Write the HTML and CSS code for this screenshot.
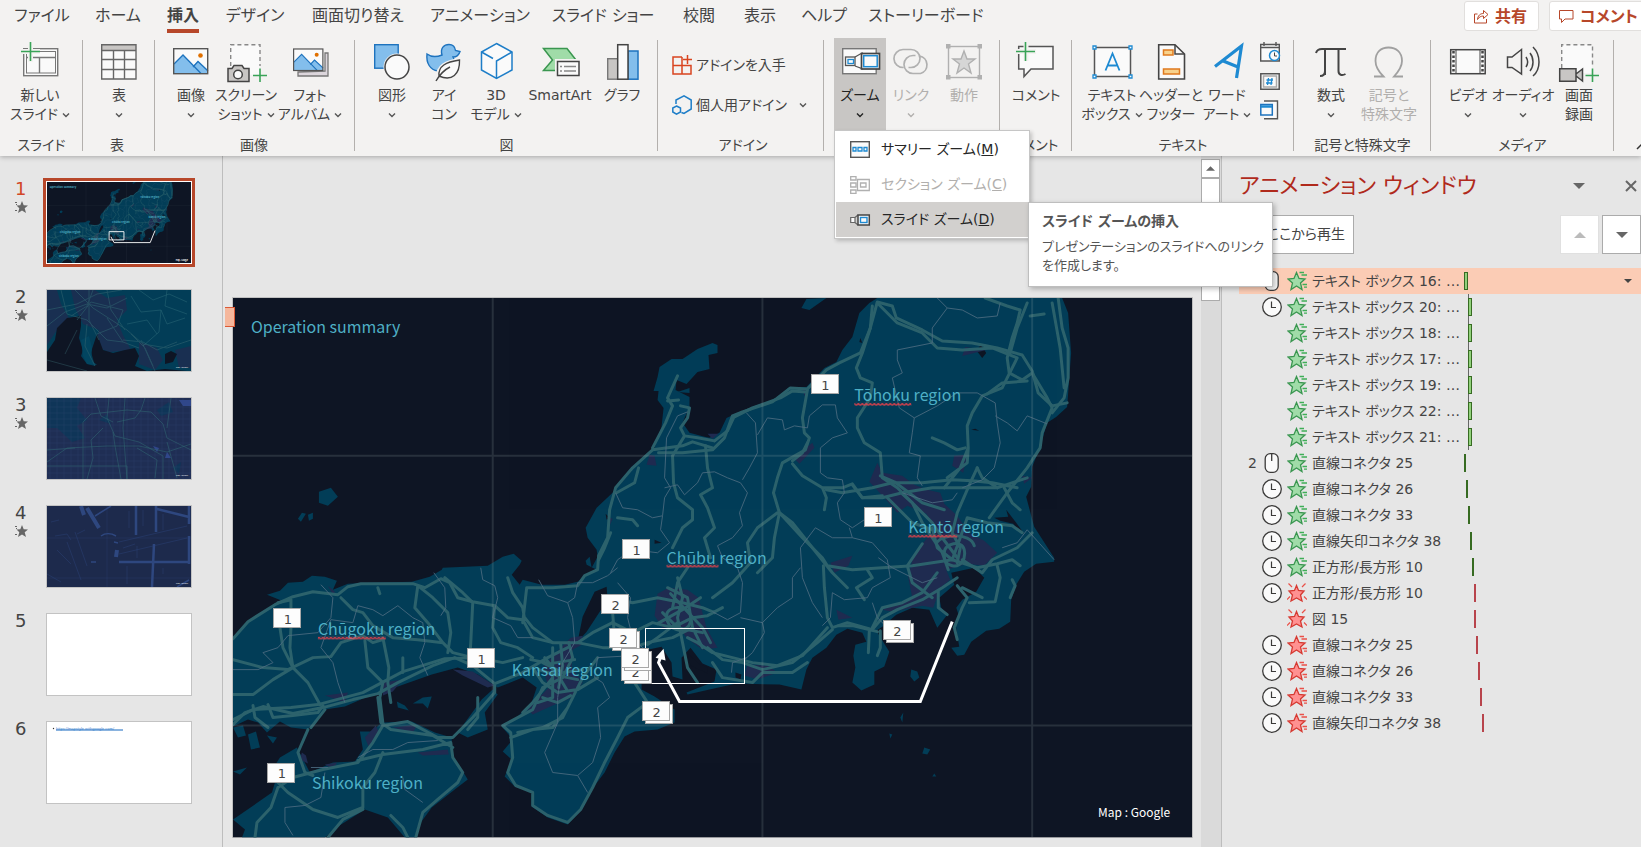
FILE: index.html
```html
<!DOCTYPE html>
<html lang="ja">
<head>
<meta charset="utf-8">
<title>プレゼンテーション</title>
<link rel="stylesheet" href="styles.css">
</head>
<body>
<svg class="defs" aria-hidden="true">
  <defs>
    <symbol id="chev" viewBox="0 0 8 6"><path d="M1 1.5 4 4.5 7 1.5" fill="none" stroke="currentColor" stroke-width="1.4"/></symbol>
    <symbol id="tri" viewBox="0 0 12 6"><path d="M0 0H12L6 6Z" fill="currentColor"/></symbol>
    <symbol id="clock" viewBox="0 0 20 20"><circle cx="10" cy="10" r="9.3" fill="#fafafa" stroke="#3b3a39" stroke-width="1.3"/><path d="M9.500 4.500V10.500H14" fill="none" stroke="#3b3a39" stroke-width="1.2"/></symbol>
    <symbol id="mouse" viewBox="0 0 20 20"><rect x="3.200" y=".7" width="13" height="18.600" rx="5" fill="#fafafa" stroke="#3b3a39" stroke-width="1.3"/><path d="M9.700 1V8" stroke="#3b3a39" stroke-width="1.3"/></symbol>
    <symbol id="star-in" viewBox="0 0 20 20"><path d="M9.500 1.500 12 7.500 18 8 13.500 12 15 18.500 9.500 15 4 18.500 5.500 12 1 8 7 7.500Z" fill="#a0dca8" stroke="#3a9650" stroke-width="1.3"/><path d="M12.500 1.500H17M14.500 4H20M15.500 13.500H20M17 16.200H20" stroke="#3fae57" stroke-width="1.3"/></symbol>
    <symbol id="star-out" viewBox="0 0 20 20"><path d="M9.500 1.500 12 7.500 18 8 13.500 12 15 18.500 9.500 15 4 18.500 5.500 12 1 8 7 7.500Z" fill="#ff9191" stroke="#d63a32" stroke-width="1.3"/><path d="M12.500 1.500H17M14.500 4H20M15.500 13.500H20M17 16.200H20" stroke="#ea5048" stroke-width="1.3"/></symbol>
    <symbol id="burst" viewBox="0 0 20 20"><path d="M9.500 2.500 11.500 7.500 17 8 13.500 12 15 18 9.500 15 4 18 5.500 12 2 8 7.500 7.500Z" fill="#ff9191" stroke="#d63a32" stroke-width="1.3"/><path d="M1.500.5 5 4M18.500.5 15 4M0 16.500 3 13.500M20 16.500 17 13.500" stroke="#ea5048" stroke-width="1.2"/></symbol>
    <symbol id="fx" viewBox="0 0 13 12"><path d="M7 0 8.700 4.300 13 4.500 9.700 7.300 11 12 7 9.500 3 12 4.300 7.300 1.500 4.500 5.300 4.300Z" fill="#666"/><path d="M0 1.500H2M1 3.500H2M0 9.500H2" stroke="#666"/></symbol>
    <symbol id="picture" viewBox="0 0 36 27"><rect x=".7" y=".7" width="34" height="25" fill="#fafafa"/><path d="M1 16 10 7 28 25.500H1ZM19 19 25 13 35 22V25.500H28Z" fill="#83beec"/><path d="M1 16 10 7 28 25.500M20 19 25 13.500 35 23" fill="none" stroke="#1e73be" stroke-width="1.300"/><circle cx="27.500" cy="7.500" r="2.300" fill="#e07000"/><rect x=".7" y=".7" width="34" height="25" fill="none" stroke="#555" stroke-width="1.400"/></symbol>
    <symbol id="map" viewBox="0 0 960 540">
      <rect width="960" height="540" fill="#0e1524"/>
      <g fill="#023d57">
        <path d="M0 341 15 324 42 307 49 303 34 297 47 293 55 285 70 284 79 278 92 279 104 283 100 292 115 286 139 285 179 284 197 279 209 272 210 270 255 268 270 259 281 256 289 263 287 267 279 277 287 287 290 282 309 287 332 287 345 284 354 277 364 272 354 267 353 263 357 259 359 270 365 259 364 252 355 240 353 230 364 210 380 195 389 185 404 167 422 150 429 129 431 110 425 102 426 93 421 93 425 79 427 69 439 61 450 61 465 51 480 45 485 47 485 55 476 57 477 71 465 74 454 86 444 82 443 92 457 99 457 109 450 125 457 135 472 139 477 140 487 135 494 120 507 114 539 104 557 89 574 89 592 70 604 64 610 52 620 39 627 15 637 5 645 0H830L836 15 839 55 835 109 824 119 815 125 807 152 800 169 799 189 794 199 802 229 822 260 822 264 804 266 792 274 784 287 779 302 778 324 767 331 754 333 739 344 732 357 725 358 719 350 727 349 723 325 727 319 724 310 730 302 744 294 752 280 742 270 719 275 722 287 707 300 709 310 715 317 705 330 697 312 680 310 664 317 650 329 644 333 657 354 652 369 642 374 642 387 629 393 620 385 623 370 621 358 623 347 634 344 630 335 615 331 604 337 594 350 580 360 574 372 569 392 547 387 504 386 477 392 455 397 454 395 482 384 484 372 470 366 458 350 449 360 450 382 440 379 439 365 429 349 415 352 409 372 409 392 422 399 442 412 442 425 425 432 402 434 392 439 382 455 372 475 359 492 349 512 335 527 315 520 299 509 299 495 282 489 272 479 279 462 270 454 280 442 269 429 282 422 299 405 304 390 290 380 265 390 245 377 225 370 199 377 165 389 135 399 112 409 92 412 75 432 58 430 47 424 34 435 25 425 15 422 0 429Z"/>
        <path d="M0 522 19 509 39 495 42 485 38 474 47 460 64 450 77 475 100 465 122 464 130 452 127 434 139 434 149 425 179 424 202 435 219 440 219 459 229 472 235 482 222 492 199 510 185 529 182 540H172L155 520 132 512 105 529 92 540H9L12 532Z"/>
        <path d="M225 435 249 402 260 392 265 397 252 415 255 432 235 440Z"/>
        <path d="M86 194 98 190 105 199 95 208 86 205ZM65 221 69 215 73 216 68 224ZM75 217 80 215 80 221 76 223ZM569 10 574 1 594 0 577 12ZM679 372 685 374 687 380 682 384 678 379ZM671 415 668 420 670 425ZM657 436 660 437 658 441ZM692 450 698 452 695 457 690 456ZM700 479 702 476 704 479ZM180 406 190 400 199 399 195 411 190 406ZM445 94 457 90 457 95ZM0 474 14 470 7 477ZM15 437 23 434 27 450 18 452ZM0 430 10 428 13 438 5 440ZM34 438 44 440 40 446ZM164 404 172 408 176 413 165 410Z"/>
      </g>
      <g fill="#0e1524"><path d="M374 289 375 302 354 334 345 344 350 319 362 294ZM774 212 784 225 792 236 786 233 781 226 768 223 762 220 776 219ZM749 47 754 55 750 60 744 52ZM422 242 429 245 422 246ZM373 216 377 220 374 222ZM628 40 630 45 627 44ZM503 375 509 377 508 382 503 380ZM743 131 747 133 739 132ZM455 355 466 366 475 370 475 376 458 368Z"/></g>
      <g fill="#1f2b50">
        <path d="M645 165 650 175 670 178 682 187 695 192 708 195 712 206 725 218 737 235 752 243 765 255 752 268 735 266 714 272 718 282 708 290 701 310 690 308 660 314 650 312 680 300 676 280 680 262 690 246 704 230 694 216 675 208 665 215 652 200 637 184ZM722 158 735 157 731 175 720 168ZM425 296 436 290 455 292 466 300 474 330 485 350 470 352 454 340 447 330 430 330 422 318ZM338 340 350 338 349 347 340 352 339 370 350 385 340 400 320 408 300 417 295 412 316 390 310 370 328 350ZM92 398 115 395 112 405ZM150 385 170 382 160 394 150 398ZM220 372 240 374 262 388 255 390 230 378ZM160 430 185 427 180 435ZM185 455 215 452 216 457 190 458ZM92 467 104 465 100 472ZM95 288 102 294 100 297ZM417 157 422 158 424 168 414 167ZM598 265 620 258 616 268 602 275ZM604 312 620 320 606 322ZM515 367 535 368 545 375 525 382 512 378ZM375 219 380 221 377 228ZM561 160 580 145 582 150 567 166ZM800 180 792 186 790 178ZM475 136 486 136 480 141ZM570 90 575 94 572 98ZM754 52 730 58 733 49ZM143 428 132 440 136 450 146 435ZM69 455 73 458 75 466 67 462Z"/>
      </g>
      <g class="roads">
        <path d="M0 341 15 324 42 307 60 299 80 294 105 297 115 289 128 286 180 286 192 290 208 281 217 285 225 300 240 304 262 308 275 320 290 322 300 340 320 345 345 345 360 335 380 325"/>
        <path d="M0 427 12 415 30 409 60 416 90 410 120 402 145 396 165 385 200 368 222 360 240 368 262 386 290 375 315 360 335 350"/>
        <path d="M0 422 20 412 58 410 85 407 130 395 170 374 212 361 245 360 270 365 290 360"/>
        <path d="M47 330 50 350 60 370 75 385 87 407M58 330 57 350 60 370M0 362 30 370 55 372 80 360 98 359 108 345 130 338 140 345 150 342M0 397 20 397 40 382 60 370M45 305 58 302V310"/>
        <path d="M108 300 120 312 130 315 140 328 160 340 185 342 210 345 220 355 240 360 260 355M132 343 135 370 150 385 147 400 150 425M185 288 182 310 195 325 210 345M185 288 200 300 215 315 218 335 215 355M150 340 156 370 155 385 158 405"/>
        <path d="M212 280 230 295 240 305 238 345 237 360M262 308 260 330 268 345 285 350 300 360M170 360V375M145 290 147 296"/>
        <path d="M275 280 280 295 290 310 292 322M290 325 294 290 320 290 345 288 352 278 365 272 366 258 375 240 377 212 383 190 400 170 420 152 450 148 460 144 480 150M292 320 300 330 320 345"/>
        <path d="M384 195 402 185 406 170M385 220 400 222 405 228M366 262 372 250 378 235"/>
        <path d="M445 78 435 100 440 108 433 125 420 150M435 103 446 102M448 108 457 110 455 120 448 130 452 138 465 140 482 143M452 138 440 158 441 185 445 200 460 212 460 222 450 230 440 250M473 148 475 170 480 190 468 197 475 210 482 230 472 240 478 260"/>
        <path d="M426 155 450 155 480 152 492 140 500 118 510 114 540 104 558 90 575 91 594 72 607 65 628 55 638 30 645 4 660 8 664 20 690 32 710 43 740 45 765 50 790 57 800 73 806 95 820 108 835 105"/>
        <path d="M482 143 495 133 502 118M500 120 520 110 548 100 560 93 573 94"/>
        <path d="M575 92 570 120 572 135 577 140 573 152 550 165 545 180 541 195 547 215 560 225 580 250 600 275 615 290"/>
        <path d="M640 8 638 30 630 55 624 70 628 80 640 85 638 100 625 120 625 130 632 145 648 155 650 180 665 190 680 205 700 225 710 240 725 260"/>
        <path d="M645 5 665 25 690 35 705 50 730 52 760 50 785 60 775 80 770 90 750 98 740 115 735 128 736 150 728 170 712 190M736 150 735 165 715 180"/>
        <path d="M753 0 775 8 788 12 785 25 780 40 775 60 777 75 790 82 800 75 815 100 820 110 810 135 808 150 795 170 775 195 757 220"/>
        <path d="M826 0 830 30 836 50 836 80 832 100 820 115M820 5 828 50 832 90M795 5 785 30 778 55M700 140 712 145 725 152 733 150M795 83 770 85 755 96M798 18 812 16"/>
        <path d="M560 166 570 178 590 190 610 190 620 186 630 200 650 200 670 195 700 190 725 190 765 190 795 180M590 190 594 200 592 212M560 163 570 155 575 145"/>
        <path d="M594 192 610 195 640 190 660 185 690 185 720 182 740 183 760 185 785 190M620 187 630 200 650 198"/>
        <path d="M545 215 525 230 515 245 518 265 500 285 480 300M547 215 542 240 540 260 525 275M547 215 570 240 590 260 595 268 620 272 650 270 680 268 700 265 720 262 745 270 765 266 780 262 788 268"/>
        <path d="M591 268 592 290 595 320 600 330 615 325 640 332 650 320 665 312 690 302 710 290 725 280M595 330 570 358 545 368 520 365 500 360 480 355 465 345 455 340"/>
        <path d="M600 332 585 345 560 365 530 372 510 365 490 362 475 350M480 365 490 380 520 385 530 375 560 375 575 365"/>
        <path d="M606 328 620 328 645 334M637 333 636 355M648 333 648 350 645 358M640 330 650 310 670 305 690 295 705 275M624 290 640 280 635 272M624 290 632 302"/>
        <path d="M706 293 706 310 715 317M725 288 735 300 730 310 722 330 725 342M737 305 763 304 768 280 765 268M730 290 750 300M780 282 783 288 778 300"/>
        <path d="M700 230 705 250 720 262 728 240 735 220 755 225 780 228 790 235M725 265 728 250 720 235 725 215 738 185 745 170M730 262 750 275 760 262 785 250 800 235M716 272 710 255 690 225 680 205 670 196"/>
        <path d="M712 255C712 245 730 242 732 252S728 270 720 268 712 262 712 255ZM704 246C708 236 738 234 742 248M690 246 675 268 680 285 700 300M648 178 662 184 690 205 712 212M655 200 680 225 700 232M745 170 750 180 765 190M772 190 780 205 788 212"/>
        <path d="M380 325 400 335 420 325 440 330 460 320 475 318 490 310M378 300 400 305 425 300 450 305 470 310 482 315M345 345 370 350 400 350 415 345 440 340 460 330"/>
        <path d="M445 280 450 300 445 320 450 345 455 370 465 385M435 290 455 300 460 330 470 350M430 315 445 330 470 335M455 270 445 285 440 310M415 347 425 340 445 325"/>
        <path d="M434 318C434 308 456 306 458 318S450 334 444 332 434 326 434 318ZM425 326 450 312 468 300M438 296 470 330 478 345"/>
        <path d="M380 315 382 340 400 350 402 385 415 405 395 420 385 440 372 465 360 490 348 512 335 525 315 518 300 508 300 495 283 488 275 475 280 460 278 435 270 428 300 412 310 390 330 380 340 360 336 345"/>
        <path d="M285 435 310 430 330 420 340 400 350 380 365 360M300 370 310 385 325 395 345 392 365 380M320 350 320 400 305 405M320 380 300 405 290 415M310 365 330 375 350 372M278 440 300 432 320 430 335 410"/>
        <path d="M306 372 325 378 345 382M312 360 322 372 334 392M328 346 330 368 326 390M298 362 318 366 342 362M310 400 325 405 338 398"/>
        <path d="M150 428 175 424 205 440 220 440 240 420 262 395 262 388M150 428 140 445 125 465 90 472 60 480 45 490 38 510 24 525 22 540M125 463 150 457 190 452 218 445 220 460 230 475 225 485 205 502 190 515 183 540M150 455 142 475 130 490 130 510 105 520 80 512 55 495 45 485M130 512 110 522 95 540M158 518 170 530 175 540M145 400 148 425 158 432 200 438 220 450"/>
        <path d="M75 432 65 455 72 475 80 478M92 412 78 430M20 408 22 420 35 430M245 400 245 420 235 432M35 407 40 420 60 418 85 415 90 408"/>
      </g>
      <g class="borders">
        <path d="M88 287 100 300 98 320 85 335 55 338 45 350 30 355 40 365 25 372 0 372M98 322 88 350 100 365 105 385 112 405M98 322 120 325 125 308 140 312 150 318 165 308 180 320 190 325 192 345 187 360 195 378M201 275 212 290 213 310 208 318M248 270 250 282 262 288 265 300 260 320 278 328 285 340 300 340M306 282 315 298 335 305 342 300 345 285 360 285 375 278 385 270"/>
        <path d="M335 305 340 320 342 345 330 365 325 400 325 425 312 455 320 475 345 478 360 465 368 440 365 410 377 400 370 385 362 380M345 478 355 495M362 380 365 360 400 358 410 350 400 340 395 320 398 300 385 285"/>
        <path d="M383 195 390 210 405 212 420 220 430 218 432 200 438 190 432 180 434 140 445 118 455 114M430 218 428 232 437 245 425 255 400 252 385 262 378 275M432 190 445 187 452 197 465 185 470 175 482 174 495 180 508 185 515 195 507 215 510 228 500 240 485 248 490 260 505 270 510 285 508 315 495 322 480 314"/>
        <path d="M514 115 523 125 525 155 517 170 510 182M525 137 535 120 550 122 552 132 562 128 575 130 577 118 590 107 603 107 605 120 615 135 600 140 588 150 588 175 595 180 610 182 612 195 605 205 608 222 620 230 632 222 650 215"/>
        <path d="M705 0 715 10 730 12 745 20 765 18 768 5M715 10 700 30 700 45 665 52 665 62 670 75 660 80 667 110 682 120 680 135 677 155 688 158 685 180 690 188M682 120 705 108 725 95 745 95 763 105 765 125 768 145 762 170 750 182 730 190M763 118 775 125 785 133 795 118 815 126M617 230 620 240 640 245 655 262 658 280 640 290 635 300 612 302 600 295 598 320 590 328"/>
        <path d="M620 240 600 240 583 230 568 250 570 280 580 305 590 320M568 270 560 280 560 300 545 310 530 325 532 335 520 355 512 362M508 320 530 325M646 260 660 270 690 285 705 280M670 195 700 205 720 202 725 195M770 250 785 245 795 232 822 262M78 470 95 470M92 475 88 500 72 508 52 510 52 525 60 538M170 480 172 492 190 505M125 460 140 452 160 452 175 445 205 443M655 330 645 320 640 305M499 375 500 365 514 360"/>
      </g>
      <path class="gridlines" d="M0 158H960M0 428H960M260 0V540M530 0V540M800 0V540"/>
    </symbol>
  </defs>
</svg>

<header class="ribbon">
  <div class="topline">
    <nav class="tabs">
      <button>ファイル</button><button>ホーム</button><button class="current">挿入</button><button>デザイン</button><button>画面切り替え</button><button>アニメーション</button><button>スライド ショー</button><button>校閲</button><button>表示</button><button>ヘルプ</button><button>ストーリーボード</button>
    </nav>
    <div class="actions">
      <button class="pill"><svg width="15" height="15" viewBox="0 0 15 15" fill="none" stroke="currentColor"><path d="M3.500 5H.5V14H12.500V10M3.500 10.500C4 6.500 6 4.500 9.500 4.500V1.500L14 5.500 9.500 9.500V7C7 7 5 8 3.500 10.500Z"/></svg>共有</button>
      <button class="pill"><svg width="15" height="15" viewBox="0 0 15 15" fill="none" stroke="currentColor"><path d="M.5 1.500H14V10H6L2.500 13.500V10H.5Z"/></svg>コメント</button>
    </div>
  </div>
  <div class="groups">
    <section class="group g1">
      <div class="tools">
        <button class="tool w60"><svg class="ico" viewBox="0 0 40 40"><rect x="3.700" y="6.700" width="34" height="27" fill="#fafafa" stroke="#777" stroke-width="1.400"/><rect x="6.500" y="9.500" width="29" height="21.500" fill="none" stroke="#777"/><path d="M7 15.500H35M19.500 16V31" stroke="#777" stroke-width="1.400"/><path d="M0 9.500H20M10.500 0V20" stroke="#f3f2f1" stroke-width="5"/><path d="M1 9.500H20M10.500 0V19" stroke="#39a357" stroke-width="1.600"/></svg><span>新しい</span><span>スライド<svg class="chev"><use href="#chev"/></svg></span></button>
      </div><h2>スライド</h2>
    </section>
    <section class="group g2">
      <div class="tools">
        <button class="tool w60"><svg class="ico" viewBox="0 0 40 40"><path d="M2.700 2.700H37V37H2.700Z" fill="#fafafa"/><path d="M3 3H37V8H3Z" fill="#c8c6c4"/><path d="M2.700 2.700H37V37H2.700ZM3 8.500H37M3 17.500H37M3 27.500H37M14.500 8V37M25.500 8V37" fill="none" stroke="#666" stroke-width="1.400"/></svg><span>表</span><span><svg class="chev"><use href="#chev"/></svg></span></button>
      </div><h2>表</h2>
    </section>
    <section class="group g3">
      <div class="tools">
        <button class="tool w56"><svg class="ico" viewBox="0 0 40 40"><use href="#picture" x="2" y="6" width="36" height="27"/></svg><span>画像</span><span><svg class="chev"><use href="#chev"/></svg></span></button>
        <button class="tool w54"><svg class="ico" viewBox="0 0 40 40"><rect x="4.700" y="2.700" width="29" height="30" fill="#fafafa"/><path d="M4.700 24V2.700H34V24" fill="none" stroke="#888" stroke-width="1.400" stroke-dasharray="4 3"/><path d="M2 26.500H6L8 23.500H16L18 26.500H23V39.500H2Z" fill="#c8c6c4" stroke="#444" stroke-width="1.500"/><circle cx="12" cy="32.500" r="4.300" fill="#fafafa" stroke="#444" stroke-width="1.500"/><path d="M27 33.500H41M34 26.500V40" stroke="#39a357" stroke-width="1.600"/></svg><span>スクリーン</span><span>ショット<svg class="chev"><use href="#chev"/></svg></span></button>
        <button class="tool w74"><svg class="ico" viewBox="0 0 40 40"><path d="M8 30V34H38V11H35V29Z" fill="#dcd6dc" stroke="#777" stroke-width="1.300"/><use href="#picture" x="3" y="6" width="31" height="24"/></svg><span>フォト</span><span>アルバム<svg class="chev"><use href="#chev"/></svg></span></button>
      </div><h2>画像</h2>
    </section>
    <section class="group g4">
      <div class="tools">
        <button class="tool w54"><svg class="ico" viewBox="0 0 40 40"><rect x="2.700" y="2.700" width="23.500" height="23.500" fill="#83beec" stroke="#1e73be" stroke-width="1.400"/><circle cx="25" cy="25" r="13.500" fill="#f3f2f1"/><circle cx="25" cy="25" r="12" fill="#fafafa" stroke="#444" stroke-width="1.500"/></svg><span>図形</span><span><svg class="chev"><use href="#chev"/></svg></span></button>
        <button class="tool w50"><svg class="ico" viewBox="0 0 40 40"><path d="M3 12C7 15 13 15 18 13 16 6 20 2.500 25 2.500 29 2.500 31 5 31.500 8.500L36 9.500C35 13 32 15 29 15 33 22 29 29 20 29H14C6 28 2 21 3 12Z" fill="#83beec" stroke="#1e73be" stroke-width="1.400"/><path d="M35.500 18C23 20 13 24 14 36 28 40 36 34 35.500 18Z" fill="#fafafa" stroke="#f3f2f1" stroke-width="4"/><path d="M35.500 18C22 20 14 24 15 34 28 40 36 32 35.500 18ZM12 39C16 32 20 28 26 25" fill="#fafafa" stroke="#444" stroke-width="1.400"/></svg><span>アイ</span><span>コン</span></button>
        <button class="tool w54"><svg class="ico" viewBox="0 0 40 40"><path d="M20.500 1.500 36 10V28L20.500 36.500 5.500 28V10Z" fill="#fafafa" stroke="#1e7ec8" stroke-width="1.500"/><path d="M5.500 10 17 16.500M36 10 20.500 19V36.500" fill="none" stroke="#1e7ec8" stroke-width="1.500"/></svg><span>3D</span><span>モデル<svg class="chev"><use href="#chev"/></svg></span></button>
        <button class="tool w74"><svg class="ico" viewBox="0 0 40 40"><path d="M3.500 6.500H27L36 18 27 28.500H3.500L12.500 18Z" fill="#a0dca8" stroke="#3a9650" stroke-width="1.500"/><rect x="15" y="17" width="25" height="19" fill="#f3f2f1"/><rect x="17.500" y="19.500" width="21.500" height="14" fill="#fafafa" stroke="#444" stroke-width="1.500"/><path d="M20 24.500H22M24 24.500H36M20 29H22M24 29H36" stroke="#888" stroke-width="1.300"/></svg><span>SmartArt</span></button>
        <button class="tool w50"><svg class="ico" viewBox="0 0 40 40"><rect x="5.700" y="16.700" width="10" height="20.500" fill="#c8c6c4" stroke="#777" stroke-width="1.400"/><rect x="26" y="9" width="10" height="28.200" fill="#83beec" stroke="#1e73be" stroke-width="1.500"/><rect x="15.700" y="2.700" width="10.300" height="34.500" fill="#fafafa" stroke="#444" stroke-width="1.500"/></svg><span>グラフ</span></button>
      </div><h2>図</h2>
    </section>
    <section class="group g5">
      <div class="addins">
        <button><svg width="20" height="20" viewBox="0 0 20 20" fill="none" stroke="#d9441f" stroke-width="1.500"><path d="M10 2H1V19H19V10.500H1M10 2V19M15.500 0V9M11 4.500H20"/></svg>アドインを入手</button>
        <button><svg width="20" height="20" viewBox="0 0 20 20" fill="none" stroke="#1e7ec8" stroke-width="1.500"><path d="M4 9V5L12 .8 19.200 5V14L12 18.500 9.500 17.500M4.500 11 8.500 13V17L4.500 19.200.8 17V13Z"/></svg>個人用アドイン<svg class="chev far"><use href="#chev"/></svg></button>
      </div><h2>アドイン</h2>
    </section>
    <section class="group g6">
      <div class="tools">
        <div class="zoomwrap">
          <button class="tool w52 open"><svg class="ico" viewBox="0 0 40 40"><rect x="2.700" y="6.700" width="33.500" height="25" fill="#fafafa" stroke="#777" stroke-width="1.400"/><path d="M15 15 22 11V26.500L15 24" fill="#fafafa" stroke="#555" stroke-width="1.300"/><rect x="21.500" y="11.500" width="18" height="15.500" fill="#fafafa" stroke="#444" stroke-width="1.700"/><rect x="23.700" y="13.700" width="13.500" height="11" fill="none" stroke="#1e8ad2" stroke-width="1.500"/><rect x="5.500" y="15" width="9.500" height="8.500" fill="#fafafa" stroke="#555" stroke-width="1.300"/><rect x="8" y="17.500" width="5.500" height="4" fill="none" stroke="#1e8ad2" stroke-width="1.300"/></svg><span>ズーム</span><span><svg class="chev"><use href="#chev"/></svg></span></button>
          <div class="menu" role="menu">
            <button role="menuitem"><svg width="20" height="17" viewBox="0 0 20 17"><rect x=".7" y=".7" width="18.600" height="15.600" fill="#fafafa" stroke="#555" stroke-width="1.400"/><path d="M3 6.500H6V10H3ZM8 6.500H12V10H8ZM14 6.500H17V10H14Z" fill="none" stroke="#1e8ad2" stroke-width="1.300"/></svg><span>サマリー ズーム(<u>M</u>)</span></button>
            <button role="menuitem" disabled><svg width="20" height="18" viewBox="0 0 20 18" fill="none" stroke="#b0b0b0" stroke-width="1.300"><path d="M.7.7H6V4H.7ZM.7 7H6V11H.7ZM.7 14H6V17.300H.7ZM7.500 3.500H19.300V14.500H7.500ZM10.500 7H16V11H10.500Z"/></svg><span>セクション ズーム(<u>C</u>)</span></button>
            <button role="menuitem" class="hover"><svg width="20" height="12" viewBox="0 0 20 12"><path d="M.7 3.500H5V8.500H.7ZM5 3.500 8 1M5 8.500 8 11" fill="#fafafa" stroke="#666" stroke-width="1.200"/><rect x="8" y="1" width="11.300" height="10" fill="#fafafa" stroke="#444" stroke-width="1.500"/><rect x="10.500" y="3.500" width="6.500" height="5" fill="none" stroke="#1e8ad2" stroke-width="1.400"/></svg><span>スライド ズーム(<u>D</u>)</span></button>
            <div class="tip" role="tooltip"><strong>スライド ズームの挿入</strong><p>プレゼンテーションのスライドへのリンク<br>を作成します。</p></div>
          </div>
        </div>
        <button class="tool w50" disabled><svg class="ico" viewBox="0 0 40 40" fill="none" stroke="#b0b0b0" stroke-width="1.700"><path d="M12.500 25.500A9.300 9 0 0 1 12 7.500H20A9 9 0 0 1 20 25.500H17.500M28.500 14A9 9 0 0 1 29.500 31.500H22A9 9 0 0 1 22 13.500H24.500"/></svg><span>リンク</span><span><svg class="chev"><use href="#chev"/></svg></span></button>
        <button class="tool w56" disabled><svg class="ico" viewBox="0 0 40 40"><rect x="4.500" y="4.500" width="31" height="31" fill="none" stroke="#b0b0b0" stroke-width="1.400"/><path d="M2 2H6.500V6.500H2ZM33.500 2H38V6.500H33.500ZM2 33H6.500V37.500H2ZM33.500 33H38V37.500H33.500Z" fill="#b0b0b0"/><path d="M20 9 23 17H31L24.500 22 27 31 20 26 13 31 15.500 22 9 17H17Z" fill="#d6d6d6" stroke="#b0b0b0" stroke-width="1.400"/></svg><span>動作</span></button>
      </div><h2>リンク</h2>
    </section>
    <section class="group g7">
      <div class="tools">
        <button class="tool w60"><svg class="ico" viewBox="0 0 40 40"><path d="M2.700 4.500H37V27H15L8 34.500V27H2.700Z" fill="#fafafa" stroke="#555" stroke-width="1.500"/><path d="M0 9.500H20M10 0V19" stroke="#f3f2f1" stroke-width="5"/><path d="M0 9.500H19M9.500 0V19" stroke="#39a357" stroke-width="1.600"/></svg><span>コメント</span></button>
      </div><h2>コメント</h2>
    </section>
    <section class="group g8">
      <div class="tools">
        <button class="tool w60"><svg class="ico" viewBox="0 0 40 40"><rect x="2.500" y="5.500" width="36" height="29" fill="#fafafa" stroke="#555" stroke-width="1.500"/><path d="M1 4H4V7H1ZM37 4H40V7H37ZM1 33H4V36H1ZM37 33H40V36H37Z" fill="#fafafa" stroke="#1e8ad2" stroke-width="1.300"/><path d="M13.500 28.500 20.500 11.500 27.500 28.500M16 23.500H25" fill="none" stroke="#1e8ad2" stroke-width="1.800"/></svg><span>テキスト</span><span>ボックス<svg class="chev"><use href="#chev"/></svg></span></button>
        <button class="tool w58"><svg class="ico" viewBox="0 0 40 40"><path d="M7.700 2.700H24L33.500 12V37H7.700Z" fill="#fafafa" stroke="#444" stroke-width="1.600"/><path d="M24 3V12H33" fill="none" stroke="#444" stroke-width="1.500"/><path d="M12.500 8H22V13H12.500ZM12.500 27H28.500V32H12.500Z" fill="#f8d28c" stroke="#e07a1e" stroke-width="1.500"/></svg><span>ヘッダーと</span><span>フッター</span></button>
        <button class="tool w54"><svg class="ico" viewBox="0 0 40 40"><path d="M8 24.500 34.500 4 29.500 36M15 18.500 31 25" fill="none" stroke="#1e8ad2" stroke-width="3.200"/></svg><span>ワード</span><span>アート<svg class="chev"><use href="#chev"/></svg></span></button>
        <div class="minis">
          <button aria-label="日付と時刻"><svg width="20" height="20" viewBox="0 0 20 20"><path d="M.7 2.500H19.300V19H.7ZM4 0V4M16 0V4M1 5.500H19" fill="#fafafa" stroke="#555" stroke-width="1.400"/><circle cx="14.500" cy="13.500" r="5" fill="#fafafa" stroke="#1e8ad2" stroke-width="1.500"/><path d="M14.500 10.500V14H17" fill="none" stroke="#444"/></svg></button>
          <button aria-label="スライド番号"><svg width="20" height="17" viewBox="0 0 20 17"><path d="M.8.8H19.200V16.200H.8Z" fill="#fafafa" stroke="#555" stroke-width="1.500"/><path d="M3.500 3H16.500V14H3.500Z" fill="#fafafa" stroke="#aaa" stroke-width="1.500"/><path d="M8.500 5 7.500 12M12 5 11 12M6.500 7H13M6 10H12.500" stroke="#1e8ad2" stroke-width="1.300"/></svg></button>
          <button aria-label="オブジェクト"><svg width="20" height="20" viewBox="0 0 20 20"><path d="M4 1H17.500V18.800H4" fill="#fafafa" stroke="#555" stroke-width="1.400"/><rect x=".8" y="4.500" width="11.500" height="10.500" fill="#fafafa" stroke="#1e73be" stroke-width="1.500"/><path d="M1 6.500H12" stroke="#1e8ad2" stroke-width="2.500"/></svg></button>
        </div>
      </div><h2>テキスト</h2>
    </section>
    <section class="group g9">
      <div class="tools">
        <button class="tool w54"><svg class="ico" viewBox="0 0 40 40"><path d="M5 11C6 7.500 8 7 11 7H35M14 7V33M9 34C12 34 14 33 14 29M27.500 7V29C27.500 33 31 34 34.500 32" fill="none" stroke="#444" stroke-width="2"/></svg><span>数式</span><span><svg class="chev"><use href="#chev"/></svg></span></button>
        <button class="tool w62" disabled><svg class="ico" viewBox="0 0 40 40"><path d="M5 34.500H14.500C9 29 6.500 24 6.500 19 6.500 10 12 5.500 19.500 5.500S33 10 33 19C33 24 30 29 25 34.500H34" fill="none" stroke="#a0a0a0" stroke-width="1.800"/></svg><span>記号と</span><span>特殊文字</span></button>
      </div><h2>記号と特殊文字</h2>
    </section>
    <section class="group g10">
      <div class="tools">
        <button class="tool w54"><svg class="ico" viewBox="0 0 40 40"><rect x="2.700" y="7.700" width="34.500" height="24" fill="#fafafa" stroke="#444" stroke-width="1.500"/><path d="M8 8V32M32 8V32" stroke="#444" stroke-width="1"/><path d="M5.500 9V32M34.500 9V32" stroke="#444" stroke-width="2.500" stroke-dasharray="2.500 2"/></svg><span>ビデオ</span><span><svg class="chev"><use href="#chev"/></svg></span></button>
        <button class="tool w56"><svg class="ico" viewBox="0 0 40 40" fill="none" stroke="#444" stroke-width="1.500"><path d="M4.500 15H9L18.500 7.500V32L9 25.500H4.500ZM23 15C25 18 25 22 23 25M27 11C31 16 31 24 27 29M30 5C38 13 38 27 30 34"/></svg><span>オーディオ</span><span><svg class="chev"><use href="#chev"/></svg></span></button>
        <button class="tool w56"><svg class="ico" viewBox="0 0 40 40"><rect x="3" y="3" width="30" height="28" fill="#fafafa"/><path d="M2.700 26V2.700H33.500V24" fill="none" stroke="#888" stroke-width="1.400" stroke-dasharray="4 3"/><path d="M.7 26.700H17V39.300H.7ZM17 32 23.500 27V39L17 34" fill="#c8c6c4" stroke="#444" stroke-width="1.500"/><path d="M26.500 33.500H40M33.500 26.500V40" stroke="#39a357" stroke-width="1.600"/></svg><span>画面</span><span>録画</span></button>
      </div><h2>メディア</h2>
    </section>
    <button class="collapse" aria-label="リボンを折りたたむ"><svg width="12" height="7" viewBox="0 0 12 7"><path d="M1 6 6 1 11 6" fill="none" stroke="#333" stroke-width="1.500"/></svg></button>
  </div>
</header>

<main class="work">
  <ol class="thumbs">
    <li class="active"><div class="no">1<svg><use href="#fx"/></svg></div><svg class="thumb" viewBox="0 0 960 540"><use href="#map"/><g class="tiny"><text x="18" y="42">Operation summary</text><text x="622" y="106">Tōhoku region</text><text x="676" y="240">Kantō region</text><text x="434" y="272">Chūbu region</text><text x="85" y="340">Chūgoku region</text><text x="279" y="385">Kansai region</text><text x="79" y="500">Shikoku region</text><text class="credit" x="940" y="524">Map : Google</text></g><path d="M414 331H513V386H414ZM720 324 688 404H447L426 365" fill="none" stroke="#fff" stroke-width="6"/></svg></li>
    <li><div class="no">2<svg><use href="#fx"/></svg></div><svg class="thumb" viewBox="0 0 144 81"><rect width="144" height="81" fill="#023d57"/><path d="M0 0H10L14 14 22 28 10 40 0 55ZM24 0H48L60 8 78 5 80 20 70 30 76 45 84 60 62 62 48 56 52 40 36 34 28 18ZM92 52 110 58 116 70 108 80 92 74ZM128 60 144 56V78H132Z" fill="#1f2c50" opacity=".8"/><path d="M0 62 8 50 10 38 20 28 34 26 34 36 32 48 36 60 34 66 40 74 48 76 44 62 50 44 56 60 66 63 78 60 88 58 92 66 88 76 100 81H0ZM118 64 124 61 130 64 126 72 118 74ZM100 81 118 79 140 81Z" fill="#0e1524"/><path d="M34 50 42 46 45 58 44 70 50 75 40 74 36 66Z" fill="#024560"/><g class="fine"><path d="M0 36 18 22 40 14 60 18 80 8M14 0 20 24 40 30 60 50 76 52M42 0V30L52 50M28 0 46 18 80 40 96 54 120 58 144 50M46 0 40 16 24 26M60 0 64 20 78 40M0 20 30 14 50 4 75 0M30 30 44 12 76 20 70 36 50 44M84 44 98 58 106 76M76 50 96 52 110 60 130 52M40 34 38 56 48 76M60 28 76 52 92 58M94 50 108 81"/><path class="dim" d="M84 6 94 22 114 20 120 34 138 28M92 0 106 10 122 4 140 12M80 34 100 30 110 44M114 20 112 42 96 56M120 0 118 16 140 24M18 64 30 40M0 70 40 81"/></g><text class="thumbcredit" x="141" y="78">Map : Google</text></svg></li>
    <li><div class="no">3<svg><use href="#fx"/></svg></div><svg class="thumb" viewBox="0 0 144 81"><defs><pattern id="blocks" width="7" height="6" patternUnits="userSpaceOnUse"><path d="M0 3H7M3 0V6" stroke="#304472" stroke-width=".4" opacity=".6"/></pattern></defs><rect width="144" height="81" fill="#1f2e54"/><path d="M0 0H34L30 10 40 22 30 28 38 40 25 44 10 30 0 30ZM52 22 60 16 64 26ZM110 12 122 4 126 14 114 18ZM126 70 134 64 132 76Z" fill="#07395a" opacity=".65"/><rect width="144" height="81" fill="url(#blocks)"/><path d="M132 2H144V8H136ZM106 48 112 50 110 54ZM120 54 124 60 118 60Z" fill="#30478a"/><g class="fine"><path d="M0 64 20 50 60 48 92 48 120 54 144 46M0 68H80V81M36 81V24L44 16 80 12 104 14 116 26 120 40 144 52M48 0 54 18 66 24M62 0 60 20 68 38 92 44 116 58V81M98 0 94 12 88 20 70 24M78 0 76 30 80 81M66 34 68 48 74 81M40 81 46 60 44 42 56 30M124 0 120 30M130 80 120 44M0 52 28 50M90 50 110 62 108 80"/></g><text class="thumbcredit" x="141" y="78">Map : Google</text></svg></li>
    <li><div class="no">4<svg><use href="#fx"/></svg></div><svg class="thumb" viewBox="0 0 144 81"><rect width="144" height="81" fill="#1d2a4c"/><g fill="none" stroke="#2e477f"><path stroke-width="2.500" d="M89 0V29M109 0V26M107 38 105 81M72 56H143M142 0V18M142 30V58M110 3 142 11"/><path stroke-width="4" d="M34 0 37 9M40 2 52 22M70 44 69 51"/><path stroke-width="1.500" d="M48 10 64 0M54 30C58 27 64 27 69 30M67 36 71 37M130 81 142 74M44 56H49"/><path stroke-width="1" opacity=".4" d="M72 36 140 20M72 48 140 32M82 5V22M96 4V20M116 8V24M80 60V78M116 62V68M4 16 12 14M8 30 20 28 24 34M20 36 34 74M28 26 40 60M10 44 24 58M0 68 14 76M30 28 38 24M76 42 88 38M90 40V52"/><path stroke-width=".5" opacity=".5" d="M0 32H144M0 72H144M60 0V81"/></g><text class="thumbcredit" x="141" y="78">Map : Google</text></svg></li>
    <li><div class="no">5</div><svg class="thumb" viewBox="0 0 144 81"><rect width="144" height="81" fill="#fff"/></svg></li>
    <li><div class="no">6</div><svg class="thumb" viewBox="0 0 144 81"><rect width="144" height="81" fill="#fff"/><circle cx="6.500" cy="6.500" r=".7" fill="#333"/><text x="9" y="8" class="url">https://mapstyle.withgoogle.com/</text><path d="M9 8H76" stroke="#1668c0"/></svg></li>
  </ol>

  <section class="editor">
    <div class="stage">
      <span class="flag"></span>
      <svg class="slide" viewBox="0 0 960 540">
        <use href="#map"/>
        <g class="labels">
          <text x="18" y="35">Operation summary</text>
          <text x="622" y="103">Tōhoku region</text>
          <text x="676" y="235">Kantō region</text>
          <text x="434" y="266">Chūbu region</text>
          <text x="85" y="337">Chūgoku region</text>
          <text x="279" y="378">Kansai region</text>
          <text x="79" y="492">Shikoku region</text>
          <text class="credit" x="866" y="520">Map : Google</text>
        </g>
        <defs><pattern id="wave" width="4" height="3" patternUnits="userSpaceOnUse"><path d="M0 2.500 2 .5 4 2.500" fill="none" stroke="#e8404a" stroke-width="1.200"/></pattern></defs>
        <g fill="url(#wave)"><rect x="622" y="105" width="57" height="3"/><rect x="676" y="237" width="49" height="3"/><rect x="434" y="267" width="52" height="3"/><rect x="85" y="339" width="68" height="3"/></g>
        <rect class="crisp" x="413" y="331" width="99" height="55" fill="none" stroke="#fff"/>
        <path d="M720 324 688 404H447L426 365 429 357" fill="none" stroke="#fff" stroke-width="3"/>
        <path d="M431 351 433 363 423 360Z" fill="#fff"/>
        <g class="marks">
          <g transform="translate(579 77)"><rect width="27" height="19"/><text x="14" y="15">1</text></g>
          <g transform="translate(632 210)"><rect width="27" height="19"/><text x="14" y="15">1</text></g>
          <g transform="translate(390 242)"><rect width="27" height="19"/><text x="14" y="15">1</text></g>
          <g transform="translate(41 311)"><rect width="27" height="19"/><text x="14" y="15">1</text></g>
          <g transform="translate(235 351)"><rect width="27" height="19"/><text x="14" y="15">1</text></g>
          <g transform="translate(35 466)"><rect width="27" height="19"/><text x="14" y="15">1</text></g>
          <g transform="translate(369 297)"><rect width="27" height="19"/><text x="14" y="15">2</text></g>
          <g transform="translate(377 331)"><rect x="3" y="3" width="27" height="19"/><rect width="27" height="19"/><text x="14" y="15">2</text></g>
          <g transform="translate(389 364)"><rect x="3" y="3" width="27" height="19"/><rect width="27" height="19"/><text x="14" y="15">2</text></g>
          <g transform="translate(389 351)"><rect x="3" y="3" width="27" height="19"/><rect width="27" height="19"/><text x="14" y="15">2</text></g>
          <g transform="translate(410 404)"><rect x="3" y="3" width="27" height="19"/><rect width="27" height="19"/><text x="14" y="15">2</text></g>
          <g transform="translate(651 323)"><rect x="3" y="3" width="27" height="19"/><rect width="27" height="19"/><text x="14" y="15">2</text></g>
        </g>
      </svg>
    </div>
    <div class="scroll"><button aria-label="上へ"><svg width="9" height="5" viewBox="0 0 12 6"><path d="M0 6H12L6 0Z" fill="#666"/></svg></button><div class="grip"></div></div>
  </section>

  <aside class="pane">
    <div class="panehead"><h1>アニメーション ウィンドウ</h1><button aria-label="オプション"><svg width="12" height="6"><use href="#tri"/></svg></button><button class="x" aria-label="閉じる"><svg width="12" height="12" viewBox="0 0 12 12"><path d="M1 1 11 11M11 1 1 11" stroke="#666" stroke-width="2"/></svg></button></div>
    <div class="panebar"><button class="play"><svg width="14" height="14" viewBox="0 0 14 14"><path d="M2 1 12 7 2 13Z" fill="#3a9650"/></svg>ここから再生</button><button class="move" disabled aria-label="前に移動"><svg width="12" height="6" viewBox="0 0 12 6"><path d="M0 6H12L6 0Z" fill="currentColor"/></svg></button><button class="move" aria-label="後に移動"><svg width="12" height="6"><use href="#tri"/></svg></button></div>
    <ul class="anims">
      <li class="sel"><span class="n">1</span><svg><use href="#mouse"/></svg><svg><use href="#star-in"/></svg><span class="name">テキスト ボックス 16: …</span><i class="bar in wide" style="margin-left:0px"></i><button aria-label="効果のオプション"><svg width="8" height="4"><use href="#tri"/></svg></button></li>
      <li class="tick"><span class="n"></span><svg><use href="#clock"/></svg><svg><use href="#star-in"/></svg><span class="name">テキスト ボックス 20: …</span><i class="bar in wide" style="margin-left:4px"></i></li>
      <li class="tick"><span class="n"></span><svg></svg><svg><use href="#star-in"/></svg><span class="name">テキスト ボックス 18: …</span><i class="bar in wide" style="margin-left:4px"></i></li>
      <li class="tick"><span class="n"></span><svg></svg><svg><use href="#star-in"/></svg><span class="name">テキスト ボックス 17: …</span><i class="bar in wide" style="margin-left:4px"></i></li>
      <li class="tick"><span class="n"></span><svg></svg><svg><use href="#star-in"/></svg><span class="name">テキスト ボックス 19: …</span><i class="bar in wide" style="margin-left:4px"></i></li>
      <li class="tick"><span class="n"></span><svg></svg><svg><use href="#star-in"/></svg><span class="name">テキスト ボックス 22: …</span><i class="bar in wide" style="margin-left:4px"></i></li>
      <li class="tick"><span class="n"></span><svg></svg><svg><use href="#star-in"/></svg><span class="name">テキスト ボックス 21: …</span><i class="bar in wide" style="margin-left:4px"></i></li>
      <li><span class="n">2</span><svg><use href="#mouse"/></svg><svg><use href="#star-in"/></svg><span class="name">直線コネクタ 25</span><i class="bar in" style="margin-left:0px"></i></li>
      <li><span class="n"></span><svg><use href="#clock"/></svg><svg><use href="#star-in"/></svg><span class="name">直線コネクタ 26</span><i class="bar in" style="margin-left:2px"></i></li>
      <li><span class="n"></span><svg><use href="#clock"/></svg><svg><use href="#star-in"/></svg><span class="name">直線コネクタ 33</span><i class="bar in" style="margin-left:4px"></i></li>
      <li><span class="n"></span><svg><use href="#clock"/></svg><svg><use href="#star-in"/></svg><span class="name">直線矢印コネクタ 38</span><i class="bar in" style="margin-left:6px"></i></li>
      <li><span class="n"></span><svg><use href="#clock"/></svg><svg><use href="#star-in"/></svg><span class="name">正方形/長方形 10</span><i class="bar in" style="margin-left:8px"></i></li>
      <li><span class="n"></span><svg><use href="#clock"/></svg><svg><use href="#burst"/></svg><span class="name">正方形/長方形 10</span><i class="bar out" style="margin-left:10px"></i></li>
      <li><span class="n"></span><svg></svg><svg><use href="#burst"/></svg><span class="name">図 15</span><i class="bar out" style="margin-left:10px"></i></li>
      <li><span class="n"></span><svg><use href="#clock"/></svg><svg><use href="#star-out"/></svg><span class="name">直線コネクタ 25</span><i class="bar out" style="margin-left:12px"></i></li>
      <li><span class="n"></span><svg><use href="#clock"/></svg><svg><use href="#star-out"/></svg><span class="name">直線コネクタ 26</span><i class="bar out" style="margin-left:14px"></i></li>
      <li><span class="n"></span><svg><use href="#clock"/></svg><svg><use href="#star-out"/></svg><span class="name">直線コネクタ 33</span><i class="bar out" style="margin-left:16px"></i></li>
      <li><span class="n"></span><svg><use href="#clock"/></svg><svg><use href="#star-out"/></svg><span class="name">直線矢印コネクタ 38</span><i class="bar out" style="margin-left:18px"></i></li>
    </ul>
  </aside>
</main>
</body>
</html>
```

FILE: styles.css
```css
* { box-sizing: border-box; }
html, body { height: 100%; }
body {
  margin: 0;
  display: flex;
  flex-direction: column;
  overflow: hidden;
  background: #e6e6e6;
  color: #444;
  font: 14px/19px "DejaVu Sans", "Noto Sans CJK JP", sans-serif;
  font-feature-settings: "palt" 1;
}
button {
  margin: 0;
  padding: 0;
  border: 0;
  background: none;
  color: inherit;
  font: inherit;
  font-feature-settings: inherit;
  white-space: nowrap;
}
h1, h2, p, ol, ul { margin: 0; padding: 0; font-weight: 400; }
ol, ul { list-style: none; }
svg { display: block; flex: none; overflow: visible; }
.defs { position: absolute; width: 0; height: 0; }

/* Ribbon */
.ribbon { flex: none; background: #f3f2f1; position: relative; z-index: 2; box-shadow: 0 1px 5px rgba(0, 0, 0, .28); }
.topline { display: flex; justify-content: space-between; height: 38px; }
.tabs {
  display: grid;
  grid-template-columns: 84px 68px 62px 82px 124px 120px 126px 66px 56px 72px 132px;
  align-items: start;
}
.tabs button { padding-top: 2px; font-size: 16px; line-height: 27px; border-bottom: 4px solid transparent; justify-self: center; }
.tabs .current { font-weight: 700; border-color: #b7472a; }
.actions { display: flex; gap: 10px; padding-top: 1px; margin-right: -22px; }
.pill {
  display: flex;
  align-items: center;
  gap: 6px;
  height: 30px;
  padding: 0 11px 0 9px;
  border: 1px solid #e1dfdd;
  border-radius: 3px;
  background: #fff;
  color: #b7472a;
  font-size: 16px;
  font-weight: 700;
}
.pill + .pill { padding-right: 24px; }
.groups { display: flex; height: 118px; }
.group { display: flex; flex: none; flex-direction: column; justify-content: space-between; padding: 0 0 1px 10px; position: relative; }
.group::after { content: ""; position: absolute; right: 0; top: 2px; bottom: 5px; width: 1px; background: #b3b0ad; }
.group h2 { text-align: center; font-size: 14px; line-height: 19px; margin-left: -10px; }
.g1 { width: 83px; }
.g2 { width: 72px; padding-left: 6px; }
.g3 { width: 200px; padding-left: 8px; }
.g4 { width: 303px; }
.g5 { width: 166px; padding-left: 14px; }
.g6 { width: 176px; }
.g7 { width: 72px; padding-left: 6px; }
.g8 { width: 222px; }
.g9 { width: 137px; }
.g10 { width: 183px; }
.tools { display: flex; height: 92px; }
.tool { display: flex; flex-direction: column; align-items: center; height: 92px; padding-top: 4px; }
.tool:disabled { color: #b1afad; }
.tool span { display: flex; align-items: center; height: 19px; gap: 4px; }
.ico { width: 40px; height: 40px; margin-bottom: 4px; }
.chev { width: 8px; height: 6px; color: #555; }
.tool:disabled .chev { color: #b1afad; }
.w50 { width: 50px; }
.w52 { width: 52px; }
.w54 { width: 54px; }
.w56 { width: 56px; }
.w58 { width: 58px; }
.w60 { width: 60px; }
.w62 { width: 62px; }
.w74 { width: 74px; }
.open { background: #c8c6c4; color: #222; }
.open .chev { color: #222; }
.minis { display: flex; flex-direction: column; justify-content: space-between; padding: 4px 0 10px 6px; }
.addins { display: flex; flex-direction: column; gap: 16px; padding-top: 15px; }
.addins button { display: flex; align-items: center; gap: 4px; height: 24px; }
.addins .far { margin-left: 8px; }
.collapse { margin: auto 0 6px 22px; }

/* Zoom menu */
.zoomwrap { position: relative; }
.menu {
  position: absolute;
  top: 92px;
  left: 0;
  z-index: 5;
  width: 196px;
  padding: 1px 0 1px 1px;
  border: 1px solid #c6c6c6;
  background: #fff;
  box-shadow: 2px 2px 4px rgba(0, 0, 0, .2);
}
.menu > button { display: flex; align-items: center; gap: 11px; width: 100%; height: 35px; padding-left: 14px; color: #262626; font-size: 14px; }
.menu > button:disabled { color: #b1afad; }
.menu > .hover { background: #d2d0ce; }
.tip {
  position: absolute;
  left: 193px;
  top: 71px;
  width: 245px;
  padding: 8px 0 11px 13px;
  border: 1px solid #bebebe;
  background: #fff;
  box-shadow: 2px 2px 5px rgba(0, 0, 0, .25);
  color: #555;
  white-space: nowrap;
  font-size: 13px;
}
.tip strong { display: block; font-size: 14px; line-height: 20px; margin-bottom: 6px; }

/* Workspace */
.work { flex: 1; min-height: 0; display: grid; grid-template-columns: 223px 1fr 420px; }
.thumbs { display: flex; flex-direction: column; gap: 25px; padding: 25px 0 0 15px; border-right: 1px solid #bdbdbd; }
.thumbs li { display: grid; grid-template-columns: 31px 146px; align-items: start; height: 83px; }
.no { display: flex; flex-direction: column; align-items: flex-start; gap: 4px; font: 18px/16px "DejaVu Sans", sans-serif; }
.no svg { width: 13px; height: 12px; }
.active .no { color: #d24726; }
.thumb { width: 146px; height: 83px; border: 1px solid #c3c3c3; overflow: hidden; }
.active .thumb { border-color: #fff; outline: 3px solid #b7472a; }
.url { font: 4px "Liberation Sans", sans-serif; fill: #4a8ad0; }
.thumbcredit { font: 2px "Liberation Sans", sans-serif; fill: #fff; text-anchor: end; }
.roads { fill: none; stroke: #2c626c; stroke-width: 3; stroke-linejoin: round; stroke-linecap: round; }
.borders { fill: none; stroke: #4d6c82; stroke-width: 1; opacity: .85; }
.gridlines { fill: none; stroke: #9aa; stroke-width: 2; opacity: .18; }
.fine { fill: none; stroke: #2f626f; stroke-width: 1; opacity: .6; }
.fine .dim { stroke: #4a8a90; opacity: .5; }

.editor { display: flex; min-width: 0; }
.stage { flex: 1; min-width: 0; padding: 141px 8px 0 9px; position: relative; }
.slide { width: 100%; height: auto; border: 1px solid #c0c0c0; }
.flag { position: absolute; left: 2px; top: 151px; width: 10px; height: 20px; z-index: 1; border: 1px solid #dc5a36; border-left: 0; background: #f5b79c; }
.labels { fill: #4eb0c6; font: 16px "Noto Sans CJK JP", sans-serif; }
.labels .credit { fill: #fff; font-size: 12px; }
.tiny { fill: #4eb0c6; font: 700 18px "Noto Sans CJK JP", sans-serif; }
.tiny .credit { fill: #fff; font-size: 13px; text-anchor: end; }
.crisp { shape-rendering: crispEdges; }
.marks rect { fill: #fdfdfd; stroke: #a8a8a8; shape-rendering: crispEdges; }
.marks text { fill: #444; font: 13px "DejaVu Sans", sans-serif; text-anchor: middle; }
.scroll { width: 20px; background: #dadada; padding: 3px 1px 0 0; }
.scroll button { display: flex; align-items: center; justify-content: center; width: 19px; height: 19px; border: 1px solid #ababab; background: #fff; }
.grip { height: 123px; border: 1px solid #ababab; background: #fff; }

/* Animation pane */
.pane { border-left: 1px solid #bdbdbd; padding-left: 17px; min-width: 0; }
.panehead { display: flex; align-items: center; height: 59px; color: #666; }
.panehead h1 { flex: 1; color: #b02a1c; font-size: 22px; line-height: 30px; white-space: nowrap; }
.panehead .x { margin: 0 4px 0 40px; }
.panebar { display: flex; height: 39px; margin-bottom: 14px; }
.panebar button { display: flex; align-items: center; justify-content: center; border: 1px solid #ababab; background: #fff; color: #666; }
.panebar .play { width: 115px; gap: 5px; margin-right: auto; color: #444; }
.panebar .move { width: 39px; }
.panebar .move:disabled { margin-right: 3px; border-color: #e0e0e0; color: #bbb; }
.anims li { display: grid; grid-template-columns: 18px 20px 20px 147px auto 1fr; column-gap: 5px; align-items: center; height: 26px; }
.anims svg { width: 20px; height: 20px; }
.anims .n { text-align: right; }
.anims .name { white-space: nowrap; }
.anims .sel { background: #fbccb5; }
.anims .sel button { justify-self: end; padding-right: 9px; }
.anims .sel button svg { width: 8px; height: 4px; }
.tick { background: linear-gradient(#666, #666) 229px 0 / 1px 100% no-repeat; }
.bar { width: 2px; height: 18px; }
.bar.in { background: #376b22; }
.bar.out { background: #b8444c; }
.bar.in.wide { width: 4px; background: #92d17c; border: 1px solid #376b22; }
```
